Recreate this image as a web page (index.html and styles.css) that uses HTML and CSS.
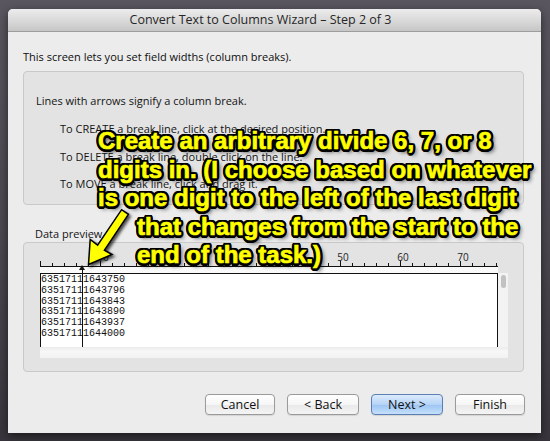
FILE: index.html
```html
<!DOCTYPE html>
<html>
<head>
<meta charset="utf-8">
<link rel="stylesheet" href="styles.css">
</head>
<body>
<div class="window">
  <div class="titlebar">Convert Text to Columns Wizard – Step 2 of 3</div>
  <div class="content">
    <p class="intro">This screen lets you set field widths (column breaks).</p>
    <div class="group">
      <p class="lead">Lines with arrows signify a column break.</p>
      <p class="step">To CREATE a break line, click at the desired position.</p>
      <p class="step">To DELETE a break line, double click on the line.</p>
      <p class="step">To MOVE a break line, click and drag it.</p>
    </div>
    <div class="preview-label">Data preview</div>
    <div class="preview">
      <svg class="ruler" width="460" height="24" viewBox="0 0 460 24">
        <defs>
          <pattern id="minor" width="12" height="24" patternUnits="userSpaceOnUse"><rect x="0" y="20" width="1" height="3" fill="#111"/></pattern>
          <pattern id="major" width="60" height="24" patternUnits="userSpaceOnUse"><rect x="0" y="18" width="1" height="5" fill="#111"/></pattern>
        </defs>
        <rect x="0" y="0" width="458" height="24" fill="url(#minor)"/>
        <rect x="0" y="0" width="458" height="24" fill="url(#major)"/>
        <rect x="0" y="23" width="458" height="1" fill="#111"/>
        <g class="ruler-labels">
          <text x="63" y="18">10</text>
          <text x="123" y="18">20</text>
          <text x="183" y="18">30</text>
          <text x="243" y="18">40</text>
          <text x="303" y="18">50</text>
          <text x="363" y="18">60</text>
          <text x="423" y="18">70</text>
        </g>
      </svg>
      <div class="data-area">
        <div class="gap"></div>
        <div class="data-row">
          <div class="data">
            <div class="line">63517111643750</div>
            <div class="line">63517111643796</div>
            <div class="line">63517111643843</div>
            <div class="line">63517111643890</div>
            <div class="line">63517111643937</div>
            <div class="line">63517111644000</div>
          </div>
          <div class="vscroll"><div class="thumb"></div></div>
        </div>
        <div class="hstrip"></div>
        <div class="break"><span class="break-arrow"></span></div>
      </div>
    </div>
    <div class="buttons">
      <button class="btn w70">Cancel</button>
      <button class="btn w72">&lt; Back</button>
      <button class="btn w72 default">Next &gt;</button>
      <button class="btn w70">Finish</button>
    </div>
  </div>
</div>

<svg class="arrow" width="550" height="441" viewBox="0 0 550 441">
  <defs>
    <filter id="sh" x="-20%" y="-20%" width="150%" height="150%">
      <feDropShadow dx="2" dy="2" stdDeviation="1.5" flood-color="#000" flood-opacity="0.7"/>
    </filter>
  </defs>
  <polygon filter="url(#sh)" points="88.5,264.5 112,254.5 104.4,250.2 128.4,214.3 121.6,209.7 97.6,245.1 90.2,239.5" fill="#ffff00" stroke="#000" stroke-width="1.5" stroke-linejoin="miter"/>
</svg>

<div class="annotation">
  <div class="ann-line">Create an arbitrary divide 6, 7, or 8</div>
  <div class="ann-line">digits in. (I choose based on whatever</div>
  <div class="ann-line">is one digit to the left of the last digit</div>
  <div class="ann-line indent">that changes from the start to the</div>
  <div class="ann-line indent">end of the task.)</div>
</div>
</body>
</html>
```

FILE: styles.css
```css
* { box-sizing: border-box; }

html, body {
  margin: 0;
  padding: 0;
}

body {
  width: 550px;
  height: 441px;
  overflow: hidden;
  position: relative;
  background: linear-gradient(180deg, #5a5660 0%, #4b4750 55%, #38363c 100%);
  font-family: "Open Sans", "DejaVu Sans", sans-serif;
  color: #111;
}

.window {
  position: relative;
  margin: 9px 0 0 8px;
  width: 533px;
  height: 424px;
  background: #ececec;
  border-radius: 5px 5px 0 0;
  box-shadow: 0 3px 10px rgba(0, 0, 0, 0.55);
  display: flex;
  flex-direction: column;
}

.titlebar {
  height: 23px;
  flex: none;
  border-radius: 5px 5px 0 0;
  background: linear-gradient(180deg, #ececec 0%, #dadada 50%, #c6c6c6 100%);
  border-bottom: 1px solid #9d9d9d;
  text-align: center;
  font-size: 12.5px;
  line-height: 22px;
  color: #262626;
  padding-right: 28px;
}

.content {
  flex: 1;
  display: flex;
  flex-direction: column;
}

p { margin: 0; }

.intro {
  margin: 18px 0 0 15px;
  font-size: 11px;
  line-height: 14px;
  color: #0d0d0d;
}

.group {
  margin: 7px 0 0 15px;
  width: 501px;
  height: 134px;
  background: #e3e3e3;
  border: 1px solid #c9c9c9;
  border-radius: 4px;
  padding: 22px 0 0 12px;
  font-size: 11px;
  line-height: 14px;
  color: #141414;
}

.step {
  margin-top: 14px;
  padding-left: 24px;
}

.step:nth-child(4) { margin-top: 13px; }

.preview-label {
  margin: 22px 0 0 27px;
  font-size: 11px;
  line-height: 14px;
  color: #141414;
}

.preview {
  margin: 1px 0 0 15px;
  width: 501px;
  height: 130px;
  background: #e3e3e3;
  border: 1px solid #c9c9c9;
  border-radius: 4px;
  padding: 0 0 0 16px;
  display: flex;
  flex-direction: column;
}

.ruler {
  display: block;
  flex: none;
}

.ruler-labels text {
  font-family: "Open Sans", "DejaVu Sans", sans-serif;
  font-size: 10px;
  fill: #222;
  text-anchor: middle;
}

.data-area {
  position: relative;
  width: 468px;
}

.gap {
  width: 458px;
  height: 6px;
  background: #fafafa;
}

.data-row {
  display: flex;
  height: 74px;
}

.data {
  width: 458px;
  height: 74px;
  background: #fff;
  border: 1px solid #111;
  border-bottom: none;
  padding: 1px 0 0 0;
  font-family: "Liberation Mono", "DejaVu Sans Mono", monospace;
  font-size: 10px;
  line-height: 10.8px;
  color: #111;
}

.vscroll {
  width: 10px;
  height: 74px;
  background: #f3f3f3;
  padding: 2px 0 0 3px;
}

.thumb {
  width: 5px;
  height: 13px;
  border-radius: 3px;
  background: #c2c2c2;
}

.hstrip {
  width: 468px;
  height: 11px;
  background: linear-gradient(180deg, #ececec 0%, #f7f7f7 40%, #f2f2f2 100%);
}

.break {
  position: absolute;
  left: 42px;
  top: 2px;
  width: 1px;
  height: 78px;
  background: #111;
}

.break-arrow {
  position: absolute;
  left: -3px;
  top: -4px;
  width: 0;
  height: 0;
  border-left: 3.5px solid transparent;
  border-right: 3.5px solid transparent;
  border-bottom: 5px solid #111;
}

.buttons {
  margin-top: 22px;
  display: flex;
  justify-content: flex-end;
  gap: 12px;
  padding-right: 16px;
}

.btn {
  height: 21px;
  border: 1px solid #9a9a9a;
  border-radius: 4px;
  background: linear-gradient(180deg, #ffffff 0%, #f6f6f6 50%, #e9e9e9 51%, #f4f4f4 100%);
  font-family: "Open Sans", "DejaVu Sans", sans-serif;
  font-size: 12.5px;
  line-height: 19px;
  color: #111;
  padding: 0;
  box-shadow: 0 1px 1px rgba(0, 0, 0, 0.1);
}

.w70 { width: 70px; }
.w72 { width: 72px; }

.btn.default {
  border-color: #5b7fb3;
  background: linear-gradient(180deg, #dcebfd 0%, #b5d3f7 50%, #9bc4f3 51%, #c6e0fb 100%);
}

.arrow {
  position: absolute;
  left: 0;
  top: 0;
  pointer-events: none;
}

.annotation {
  position: absolute;
  left: 98px;
  top: 127px;
  font-family: "Liberation Sans", Arial, sans-serif;
  font-weight: bold;
  font-size: 24px;
  line-height: 28.5px;
  color: #ffff00;
  -webkit-text-stroke: 0.7px #ffff00;
  white-space: nowrap;
  text-shadow:
    -2px -2px 0 #000, 2px -2px 0 #000, -2px 2px 0 #000, 2px 2px 0 #000,
    0 -2.5px 0 #000, 0 2.5px 0 #000, -2.5px 0 0 #000, 2.5px 0 0 #000,
    -1px -2.5px 0 #000, 1px -2.5px 0 #000, -1px 2.5px 0 #000, 1px 2.5px 0 #000,
    -2.5px -1px 0 #000, 2.5px -1px 0 #000, -2.5px 1px 0 #000, 2.5px 1px 0 #000,
    3px 3px 4px rgba(0, 0, 0, 0.85);
}

.ann-line.indent { padding-left: 39px; }
```
